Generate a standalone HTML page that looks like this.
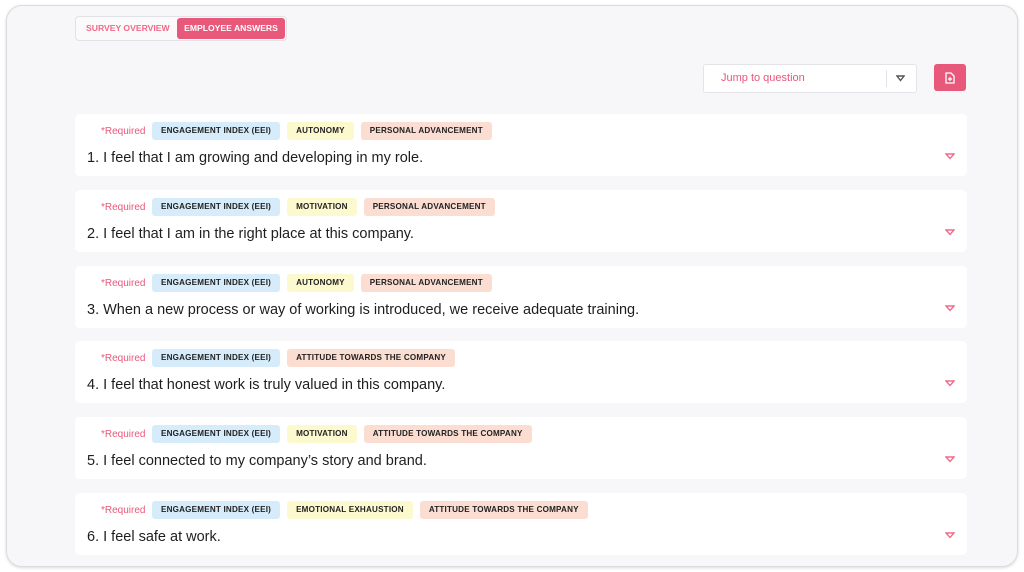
<!DOCTYPE html><html><head><style>
body{margin:0;width:1024px;height:572px;background:#fff;font-family:"Liberation Sans",sans-serif;position:relative;overflow:hidden}
.panel{position:absolute;left:6px;top:5px;width:1010px;height:560px;background:#f7f7f9;border:1px solid #dcdce0;border-radius:16px;box-shadow:0 1px 3px rgba(0,0,0,.15)}
.tabs{position:absolute;left:75px;top:16px;width:210px;height:23px;border:1px solid #e2e2e6;border-radius:4px;background:#fafafa}
.t1{position:absolute;left:10px;top:6px;font-size:8.6px;font-weight:bold;color:#ef6a8a}
.t2{position:absolute;left:101px;top:1px;width:108px;height:21px;background:#e8587a;border-radius:3px;color:#fff;font-size:8.6px;font-weight:bold;line-height:21px;text-align:center}
.sel{position:absolute;left:703px;top:64px;width:212px;height:27px;background:#fff;border:1px solid #e4e4e8;border-radius:3px}
.sel span{position:absolute;left:17px;top:7px;font-size:11px;color:#e8587a}
.sel i{position:absolute;left:182px;top:5px;width:1px;height:17px;background:#e4e4e8}
.btn{position:absolute;left:934px;top:64px;width:32px;height:27px;background:#e8587a;border-radius:3px}
.card{position:absolute;left:75px;width:892px;height:62px;background:#fff;border-radius:5px}
.req{position:absolute;left:26px;top:12px;font-size:10px;color:#e8587a}
.tags{position:absolute;left:77px;top:8px;display:flex;gap:7px}
.tag{height:18px;line-height:18px;padding:0 9px;font-size:8.1px;font-weight:bold;color:#222;border-radius:3px;letter-spacing:.2px}
.b{background:#d6ecfb}.y{background:#fdf9cf}.o{background:#fbddd2}
.q{position:absolute;left:12px;top:36px;font-size:14.5px;color:#1e1e1e}
.arr{position:absolute;right:12px;top:39px}
</style></head><body>
<div class="panel"></div>
<div class="tabs"><span class="t1">SURVEY OVERVIEW</span><div class="t2">EMPLOYEE ANSWERS</div></div>
<div class="sel"><span>Jump to question</span><i></i><svg style="position:absolute;left:192px;top:10px" width="9" height="7" viewBox="0 0 9 7"><path d="M1 1h7L4.5 5.5z" fill="none" stroke="#555" stroke-width="1.4"/></svg></div>
<div class="btn"><svg style="position:absolute;left:11px;top:8px" width="10" height="12" viewBox="0 0 10 12"><path d="M1 1h5l3 3v7H1z" fill="none" stroke="#fff" stroke-width="1.3"/><path d="M5 5v4M3 7h4" stroke="#fff" stroke-width="1.2"/></svg></div>

<div class="card" style="top:114px"><span class="req">*Required</span><div class="tags"><span class="tag b">ENGAGEMENT INDEX (EEI)</span><span class="tag y">AUTONOMY</span><span class="tag o">PERSONAL ADVANCEMENT</span></div><div class="q">1. I feel that I am growing and developing in my role.</div><svg class="arr" width="10" height="7" viewBox="0 0 10 7"><path d="M1 1h8L5 5.5z" fill="none" stroke="#ef6a8a" stroke-width="1.4"/></svg></div>
<div class="card" style="top:190px"><span class="req">*Required</span><div class="tags"><span class="tag b">ENGAGEMENT INDEX (EEI)</span><span class="tag y">MOTIVATION</span><span class="tag o">PERSONAL ADVANCEMENT</span></div><div class="q">2. I feel that I am in the right place at this company.</div><svg class="arr" width="10" height="7" viewBox="0 0 10 7"><path d="M1 1h8L5 5.5z" fill="none" stroke="#ef6a8a" stroke-width="1.4"/></svg></div>
<div class="card" style="top:266px"><span class="req">*Required</span><div class="tags"><span class="tag b">ENGAGEMENT INDEX (EEI)</span><span class="tag y">AUTONOMY</span><span class="tag o">PERSONAL ADVANCEMENT</span></div><div class="q">3. When a new process or way of working is introduced, we receive adequate training.</div><svg class="arr" width="10" height="7" viewBox="0 0 10 7"><path d="M1 1h8L5 5.5z" fill="none" stroke="#ef6a8a" stroke-width="1.4"/></svg></div>
<div class="card" style="top:341px"><span class="req">*Required</span><div class="tags"><span class="tag b">ENGAGEMENT INDEX (EEI)</span><span class="tag o">ATTITUDE TOWARDS THE COMPANY</span></div><div class="q">4. I feel that honest work is truly valued in this company.</div><svg class="arr" width="10" height="7" viewBox="0 0 10 7"><path d="M1 1h8L5 5.5z" fill="none" stroke="#ef6a8a" stroke-width="1.4"/></svg></div>
<div class="card" style="top:417px"><span class="req">*Required</span><div class="tags"><span class="tag b">ENGAGEMENT INDEX (EEI)</span><span class="tag y">MOTIVATION</span><span class="tag o">ATTITUDE TOWARDS THE COMPANY</span></div><div class="q">5. I feel connected to my company’s story and brand.</div><svg class="arr" width="10" height="7" viewBox="0 0 10 7"><path d="M1 1h8L5 5.5z" fill="none" stroke="#ef6a8a" stroke-width="1.4"/></svg></div>
<div class="card" style="top:493px"><span class="req">*Required</span><div class="tags"><span class="tag b">ENGAGEMENT INDEX (EEI)</span><span class="tag y">EMOTIONAL EXHAUSTION</span><span class="tag o">ATTITUDE TOWARDS THE COMPANY</span></div><div class="q">6. I feel safe at work.</div><svg class="arr" width="10" height="7" viewBox="0 0 10 7"><path d="M1 1h8L5 5.5z" fill="none" stroke="#ef6a8a" stroke-width="1.4"/></svg></div>
</body></html>
